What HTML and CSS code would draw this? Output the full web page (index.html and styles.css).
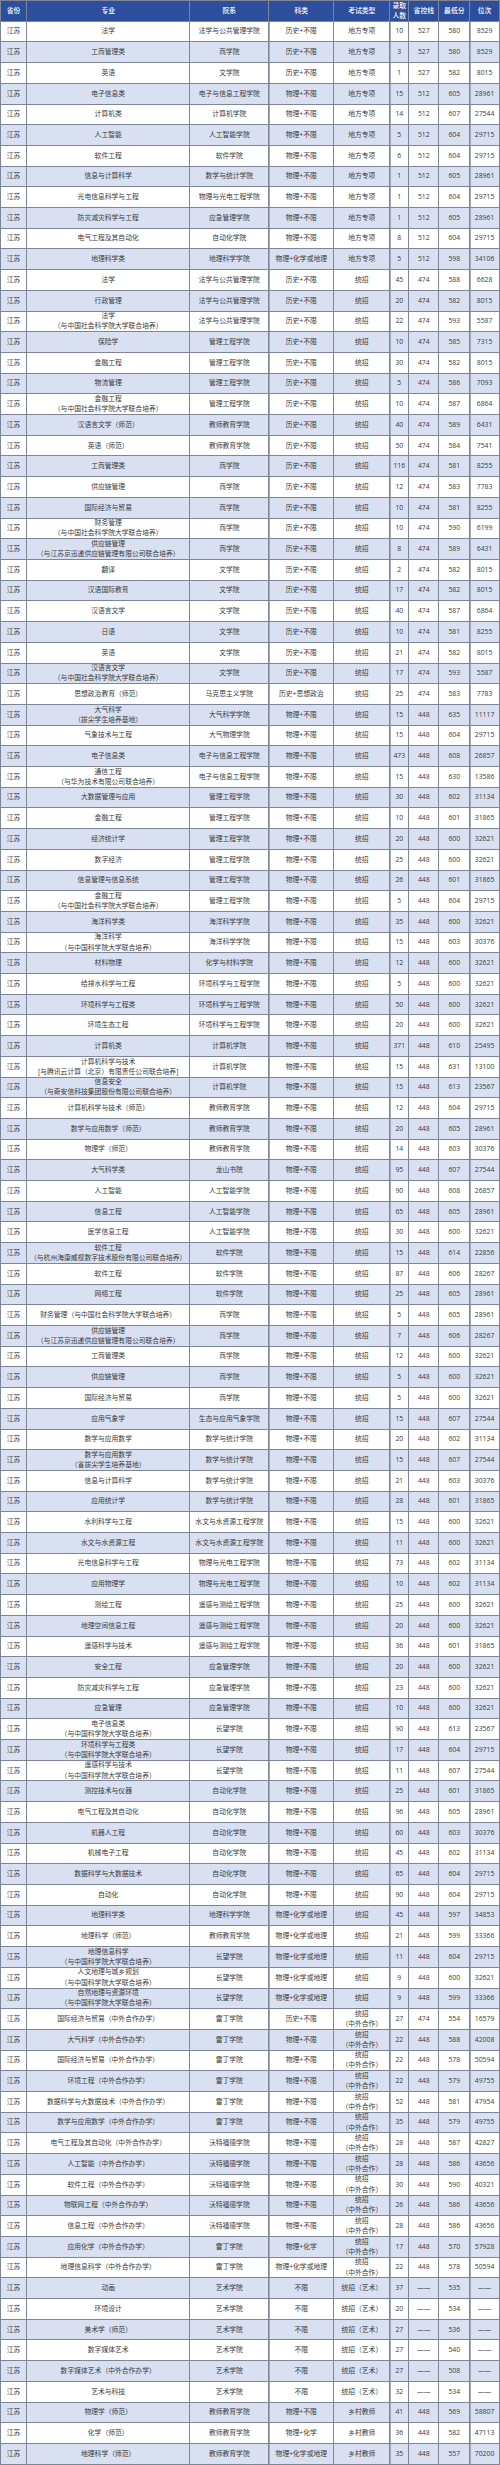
FILE: index.html
```html
<!DOCTYPE html>
<html lang="zh-CN">
<head>
<meta charset="utf-8">
<title>江苏录取分数</title>
<link rel="stylesheet" href="styles.css">
</head>
<body>
<table class="scores">
<thead>
<tr><th>省份</th><th>专业</th><th>院系</th><th>科类</th><th>考试类型</th><th>录取<br>人数</th><th>省控线</th><th>最低分</th><th>位次</th></tr>
</thead>
<tbody>
<tr><td>江苏</td><td>法学</td><td>法学与公共管理学院</td><td>历史+不限</td><td>地方专项</td><td>10</td><td>527</td><td>580</td><td>8529</td></tr>
<tr><td>江苏</td><td>工商管理类</td><td>商学院</td><td>历史+不限</td><td>地方专项</td><td>3</td><td>527</td><td>580</td><td>8529</td></tr>
<tr><td>江苏</td><td>英语</td><td>文学院</td><td>历史+不限</td><td>地方专项</td><td>1</td><td>527</td><td>582</td><td>8015</td></tr>
<tr><td>江苏</td><td>电子信息类</td><td>电子与信息工程学院</td><td>物理+不限</td><td>地方专项</td><td>15</td><td>512</td><td>605</td><td>28961</td></tr>
<tr><td>江苏</td><td>计算机类</td><td>计算机学院</td><td>物理+不限</td><td>地方专项</td><td>14</td><td>512</td><td>607</td><td>27544</td></tr>
<tr><td>江苏</td><td>人工智能</td><td>人工智能学院</td><td>物理+不限</td><td>地方专项</td><td>5</td><td>512</td><td>604</td><td>29715</td></tr>
<tr><td>江苏</td><td>软件工程</td><td>软件学院</td><td>物理+不限</td><td>地方专项</td><td>6</td><td>512</td><td>604</td><td>29715</td></tr>
<tr><td>江苏</td><td>信息与计算科学</td><td>数学与统计学院</td><td>物理+不限</td><td>地方专项</td><td>1</td><td>512</td><td>605</td><td>28961</td></tr>
<tr><td>江苏</td><td>光电信息科学与工程</td><td>物理与光电工程学院</td><td>物理+不限</td><td>地方专项</td><td>1</td><td>512</td><td>604</td><td>29715</td></tr>
<tr><td>江苏</td><td>防灾减灾科学与工程</td><td>应急管理学院</td><td>物理+不限</td><td>地方专项</td><td>1</td><td>512</td><td>605</td><td>28961</td></tr>
<tr><td>江苏</td><td>电气工程及其自动化</td><td>自动化学院</td><td>物理+不限</td><td>地方专项</td><td>8</td><td>512</td><td>604</td><td>29715</td></tr>
<tr><td>江苏</td><td>地理科学类</td><td>地理科学学院</td><td>物理+化学或地理</td><td>地方专项</td><td>5</td><td>512</td><td>598</td><td>34106</td></tr>
<tr><td>江苏</td><td>法学</td><td>法学与公共管理学院</td><td>历史+不限</td><td>统招</td><td>45</td><td>474</td><td>588</td><td>6628</td></tr>
<tr><td>江苏</td><td>行政管理</td><td>法学与公共管理学院</td><td>历史+不限</td><td>统招</td><td>20</td><td>474</td><td>582</td><td>8015</td></tr>
<tr><td>江苏</td><td>法学<br>（与中国社会科学院大学联合培养）</td><td>法学与公共管理学院</td><td>历史+不限</td><td>统招</td><td>22</td><td>474</td><td>593</td><td>5587</td></tr>
<tr><td>江苏</td><td>保险学</td><td>管理工程学院</td><td>历史+不限</td><td>统招</td><td>10</td><td>474</td><td>585</td><td>7315</td></tr>
<tr><td>江苏</td><td>金融工程</td><td>管理工程学院</td><td>历史+不限</td><td>统招</td><td>30</td><td>474</td><td>582</td><td>8015</td></tr>
<tr><td>江苏</td><td>物流管理</td><td>管理工程学院</td><td>历史+不限</td><td>统招</td><td>5</td><td>474</td><td>586</td><td>7093</td></tr>
<tr><td>江苏</td><td>金融工程<br>（与中国社会科学院大学联合培养）</td><td>管理工程学院</td><td>历史+不限</td><td>统招</td><td>10</td><td>474</td><td>587</td><td>6864</td></tr>
<tr><td>江苏</td><td>汉语言文学（师范）</td><td>教师教育学院</td><td>历史+不限</td><td>统招</td><td>40</td><td>474</td><td>589</td><td>6431</td></tr>
<tr><td>江苏</td><td>英语（师范）</td><td>教师教育学院</td><td>历史+不限</td><td>统招</td><td>50</td><td>474</td><td>584</td><td>7541</td></tr>
<tr><td>江苏</td><td>工商管理类</td><td>商学院</td><td>历史+不限</td><td>统招</td><td>116</td><td>474</td><td>581</td><td>8255</td></tr>
<tr><td>江苏</td><td>供应链管理</td><td>商学院</td><td>历史+不限</td><td>统招</td><td>12</td><td>474</td><td>583</td><td>7783</td></tr>
<tr><td>江苏</td><td>国际经济与贸易</td><td>商学院</td><td>历史+不限</td><td>统招</td><td>10</td><td>474</td><td>581</td><td>8255</td></tr>
<tr><td>江苏</td><td>财务管理<br>（与中国社会科学院大学联合培养）</td><td>商学院</td><td>历史+不限</td><td>统招</td><td>10</td><td>474</td><td>590</td><td>6199</td></tr>
<tr><td>江苏</td><td>供应链管理<br>（与江苏京迅递供应链管理有限公司联合培养）</td><td>商学院</td><td>历史+不限</td><td>统招</td><td>8</td><td>474</td><td>589</td><td>6431</td></tr>
<tr><td>江苏</td><td>翻译</td><td>文学院</td><td>历史+不限</td><td>统招</td><td>2</td><td>474</td><td>582</td><td>8015</td></tr>
<tr><td>江苏</td><td>汉语国际教育</td><td>文学院</td><td>历史+不限</td><td>统招</td><td>17</td><td>474</td><td>582</td><td>8015</td></tr>
<tr><td>江苏</td><td>汉语言文学</td><td>文学院</td><td>历史+不限</td><td>统招</td><td>40</td><td>474</td><td>587</td><td>6864</td></tr>
<tr><td>江苏</td><td>日语</td><td>文学院</td><td>历史+不限</td><td>统招</td><td>10</td><td>474</td><td>581</td><td>8255</td></tr>
<tr><td>江苏</td><td>英语</td><td>文学院</td><td>历史+不限</td><td>统招</td><td>21</td><td>474</td><td>582</td><td>8015</td></tr>
<tr><td>江苏</td><td>汉语言文学<br>（与中国社会科学院大学联合培养）</td><td>文学院</td><td>历史+不限</td><td>统招</td><td>17</td><td>474</td><td>593</td><td>5587</td></tr>
<tr><td>江苏</td><td>思想政治教育（师范）</td><td>马克思主义学院</td><td>历史+思想政治</td><td>统招</td><td>25</td><td>474</td><td>583</td><td>7783</td></tr>
<tr><td>江苏</td><td>大气科学<br>（拔尖学生培养基地）</td><td>大气科学学院</td><td>物理+不限</td><td>统招</td><td>15</td><td>448</td><td>635</td><td>11117</td></tr>
<tr><td>江苏</td><td>气象技术与工程</td><td>大气物理学院</td><td>物理+不限</td><td>统招</td><td>15</td><td>448</td><td>604</td><td>29715</td></tr>
<tr><td>江苏</td><td>电子信息类</td><td>电子与信息工程学院</td><td>物理+不限</td><td>统招</td><td>473</td><td>448</td><td>608</td><td>26857</td></tr>
<tr><td>江苏</td><td>通信工程<br>（与华为技术有限公司联合培养）</td><td>电子与信息工程学院</td><td>物理+不限</td><td>统招</td><td>15</td><td>448</td><td>630</td><td>13586</td></tr>
<tr><td>江苏</td><td>大数据管理与应用</td><td>管理工程学院</td><td>物理+不限</td><td>统招</td><td>30</td><td>448</td><td>602</td><td>31134</td></tr>
<tr><td>江苏</td><td>金融工程</td><td>管理工程学院</td><td>物理+不限</td><td>统招</td><td>10</td><td>448</td><td>601</td><td>31865</td></tr>
<tr><td>江苏</td><td>经济统计学</td><td>管理工程学院</td><td>物理+不限</td><td>统招</td><td>20</td><td>448</td><td>600</td><td>32621</td></tr>
<tr><td>江苏</td><td>数字经济</td><td>管理工程学院</td><td>物理+不限</td><td>统招</td><td>25</td><td>448</td><td>600</td><td>32621</td></tr>
<tr><td>江苏</td><td>信息管理与信息系统</td><td>管理工程学院</td><td>物理+不限</td><td>统招</td><td>26</td><td>448</td><td>601</td><td>31865</td></tr>
<tr><td>江苏</td><td>金融工程<br>（与中国社会科学院大学联合培养）</td><td>管理工程学院</td><td>物理+不限</td><td>统招</td><td>5</td><td>448</td><td>604</td><td>29715</td></tr>
<tr><td>江苏</td><td>海洋科学类</td><td>海洋科学学院</td><td>物理+不限</td><td>统招</td><td>35</td><td>448</td><td>600</td><td>32621</td></tr>
<tr><td>江苏</td><td>海洋科学<br>（与中国科学院大学联合培养）</td><td>海洋科学学院</td><td>物理+不限</td><td>统招</td><td>15</td><td>448</td><td>603</td><td>30376</td></tr>
<tr><td>江苏</td><td>材料物理</td><td>化学与材料学院</td><td>物理+不限</td><td>统招</td><td>12</td><td>448</td><td>600</td><td>32621</td></tr>
<tr><td>江苏</td><td>给排水科学与工程</td><td>环境科学与工程学院</td><td>物理+不限</td><td>统招</td><td>5</td><td>448</td><td>600</td><td>32621</td></tr>
<tr><td>江苏</td><td>环境科学与工程类</td><td>环境科学与工程学院</td><td>物理+不限</td><td>统招</td><td>50</td><td>448</td><td>600</td><td>32621</td></tr>
<tr><td>江苏</td><td>环境生态工程</td><td>环境科学与工程学院</td><td>物理+不限</td><td>统招</td><td>20</td><td>448</td><td>600</td><td>32621</td></tr>
<tr><td>江苏</td><td>计算机类</td><td>计算机学院</td><td>物理+不限</td><td>统招</td><td>371</td><td>448</td><td>610</td><td>25495</td></tr>
<tr><td>江苏</td><td>计算机科学与技术<br>[与腾讯云计算（北京）有限责任公司联合培养]</td><td>计算机学院</td><td>物理+不限</td><td>统招</td><td>15</td><td>448</td><td>631</td><td>13100</td></tr>
<tr><td>江苏</td><td>信息安全<br>（与奇安信科技集团股份有限公司联合培养）</td><td>计算机学院</td><td>物理+不限</td><td>统招</td><td>15</td><td>448</td><td>613</td><td>23567</td></tr>
<tr><td>江苏</td><td>计算机科学与技术（师范）</td><td>教师教育学院</td><td>物理+不限</td><td>统招</td><td>12</td><td>448</td><td>604</td><td>29715</td></tr>
<tr><td>江苏</td><td>数学与应用数学（师范）</td><td>教师教育学院</td><td>物理+不限</td><td>统招</td><td>20</td><td>448</td><td>605</td><td>28961</td></tr>
<tr><td>江苏</td><td>物理学（师范）</td><td>教师教育学院</td><td>物理+不限</td><td>统招</td><td>14</td><td>448</td><td>603</td><td>30376</td></tr>
<tr><td>江苏</td><td>大气科学类</td><td>龙山书院</td><td>物理+不限</td><td>统招</td><td>95</td><td>448</td><td>607</td><td>27544</td></tr>
<tr><td>江苏</td><td>人工智能</td><td>人工智能学院</td><td>物理+不限</td><td>统招</td><td>90</td><td>448</td><td>608</td><td>26857</td></tr>
<tr><td>江苏</td><td>信息工程</td><td>人工智能学院</td><td>物理+不限</td><td>统招</td><td>65</td><td>448</td><td>605</td><td>28961</td></tr>
<tr><td>江苏</td><td>医学信息工程</td><td>人工智能学院</td><td>物理+不限</td><td>统招</td><td>30</td><td>448</td><td>600</td><td>32621</td></tr>
<tr><td>江苏</td><td>软件工程<br>（与杭州海康威视数字技术股份有限公司联合培养）</td><td>软件学院</td><td>物理+不限</td><td>统招</td><td>15</td><td>448</td><td>614</td><td>22856</td></tr>
<tr><td>江苏</td><td>软件工程</td><td>软件学院</td><td>物理+不限</td><td>统招</td><td>87</td><td>448</td><td>606</td><td>28267</td></tr>
<tr><td>江苏</td><td>网络工程</td><td>软件学院</td><td>物理+不限</td><td>统招</td><td>25</td><td>448</td><td>605</td><td>28961</td></tr>
<tr><td>江苏</td><td>财务管理（与中国社会科学院大学联合培养）</td><td>商学院</td><td>物理+不限</td><td>统招</td><td>5</td><td>448</td><td>605</td><td>28961</td></tr>
<tr><td>江苏</td><td>供应链管理<br>（与江苏京迅递供应链管理有限公司联合培养）</td><td>商学院</td><td>物理+不限</td><td>统招</td><td>7</td><td>448</td><td>606</td><td>28267</td></tr>
<tr><td>江苏</td><td>工商管理类</td><td>商学院</td><td>物理+不限</td><td>统招</td><td>12</td><td>448</td><td>600</td><td>32621</td></tr>
<tr><td>江苏</td><td>供应链管理</td><td>商学院</td><td>物理+不限</td><td>统招</td><td>5</td><td>448</td><td>600</td><td>32621</td></tr>
<tr><td>江苏</td><td>国际经济与贸易</td><td>商学院</td><td>物理+不限</td><td>统招</td><td>5</td><td>448</td><td>600</td><td>32621</td></tr>
<tr><td>江苏</td><td>应用气象学</td><td>生态与应用气象学院</td><td>物理+不限</td><td>统招</td><td>15</td><td>448</td><td>607</td><td>27544</td></tr>
<tr><td>江苏</td><td>数学与应用数学</td><td>数学与统计学院</td><td>物理+不限</td><td>统招</td><td>20</td><td>448</td><td>602</td><td>31134</td></tr>
<tr><td>江苏</td><td>数学与应用数学<br>（省拔尖学生培养基地）</td><td>数学与统计学院</td><td>物理+不限</td><td>统招</td><td>15</td><td>448</td><td>607</td><td>27544</td></tr>
<tr><td>江苏</td><td>信息与计算科学</td><td>数学与统计学院</td><td>物理+不限</td><td>统招</td><td>21</td><td>448</td><td>603</td><td>30376</td></tr>
<tr><td>江苏</td><td>应用统计学</td><td>数学与统计学院</td><td>物理+不限</td><td>统招</td><td>28</td><td>448</td><td>601</td><td>31865</td></tr>
<tr><td>江苏</td><td>水利科学与工程</td><td>水文与水资源工程学院</td><td>物理+不限</td><td>统招</td><td>15</td><td>448</td><td>600</td><td>32621</td></tr>
<tr><td>江苏</td><td>水文与水资源工程</td><td>水文与水资源工程学院</td><td>物理+不限</td><td>统招</td><td>11</td><td>448</td><td>600</td><td>32621</td></tr>
<tr><td>江苏</td><td>光电信息科学与工程</td><td>物理与光电工程学院</td><td>物理+不限</td><td>统招</td><td>73</td><td>448</td><td>602</td><td>31134</td></tr>
<tr><td>江苏</td><td>应用物理学</td><td>物理与光电工程学院</td><td>物理+不限</td><td>统招</td><td>10</td><td>448</td><td>602</td><td>31134</td></tr>
<tr><td>江苏</td><td>测绘工程</td><td>遥感与测绘工程学院</td><td>物理+不限</td><td>统招</td><td>25</td><td>448</td><td>600</td><td>32621</td></tr>
<tr><td>江苏</td><td>地理空间信息工程</td><td>遥感与测绘工程学院</td><td>物理+不限</td><td>统招</td><td>20</td><td>448</td><td>600</td><td>32621</td></tr>
<tr><td>江苏</td><td>遥感科学与技术</td><td>遥感与测绘工程学院</td><td>物理+不限</td><td>统招</td><td>36</td><td>448</td><td>601</td><td>31865</td></tr>
<tr><td>江苏</td><td>安全工程</td><td>应急管理学院</td><td>物理+不限</td><td>统招</td><td>20</td><td>448</td><td>600</td><td>32621</td></tr>
<tr><td>江苏</td><td>防灾减灾科学与工程</td><td>应急管理学院</td><td>物理+不限</td><td>统招</td><td>23</td><td>448</td><td>600</td><td>32621</td></tr>
<tr><td>江苏</td><td>应急管理</td><td>应急管理学院</td><td>物理+不限</td><td>统招</td><td>10</td><td>448</td><td>600</td><td>32621</td></tr>
<tr><td>江苏</td><td>电子信息类<br>（与中国科学院大学联合培养）</td><td>长望学院</td><td>物理+不限</td><td>统招</td><td>90</td><td>448</td><td>613</td><td>23567</td></tr>
<tr><td>江苏</td><td>环境科学与工程类<br>（与中国科学院大学联合培养）</td><td>长望学院</td><td>物理+不限</td><td>统招</td><td>17</td><td>448</td><td>604</td><td>29715</td></tr>
<tr><td>江苏</td><td>遥感科学与技术<br>（与中国科学院大学联合培养）</td><td>长望学院</td><td>物理+不限</td><td>统招</td><td>11</td><td>448</td><td>607</td><td>27544</td></tr>
<tr><td>江苏</td><td>测控技术与仪器</td><td>自动化学院</td><td>物理+不限</td><td>统招</td><td>25</td><td>448</td><td>601</td><td>31865</td></tr>
<tr><td>江苏</td><td>电气工程及其自动化</td><td>自动化学院</td><td>物理+不限</td><td>统招</td><td>96</td><td>448</td><td>605</td><td>28961</td></tr>
<tr><td>江苏</td><td>机器人工程</td><td>自动化学院</td><td>物理+不限</td><td>统招</td><td>60</td><td>448</td><td>603</td><td>30376</td></tr>
<tr><td>江苏</td><td>机械电子工程</td><td>自动化学院</td><td>物理+不限</td><td>统招</td><td>45</td><td>448</td><td>602</td><td>31134</td></tr>
<tr><td>江苏</td><td>数据科学与大数据技术</td><td>自动化学院</td><td>物理+不限</td><td>统招</td><td>65</td><td>448</td><td>604</td><td>29715</td></tr>
<tr><td>江苏</td><td>自动化</td><td>自动化学院</td><td>物理+不限</td><td>统招</td><td>90</td><td>448</td><td>604</td><td>29715</td></tr>
<tr><td>江苏</td><td>地理科学类</td><td>地理科学学院</td><td>物理+化学或地理</td><td>统招</td><td>45</td><td>448</td><td>597</td><td>34853</td></tr>
<tr><td>江苏</td><td>地理科学（师范）</td><td>教师教育学院</td><td>物理+化学或地理</td><td>统招</td><td>21</td><td>448</td><td>599</td><td>33366</td></tr>
<tr><td>江苏</td><td>地理信息科学<br>（与中国科学院大学联合培养）</td><td>长望学院</td><td>物理+化学或地理</td><td>统招</td><td>11</td><td>448</td><td>604</td><td>29715</td></tr>
<tr><td>江苏</td><td>人文地理与城乡规划<br>（与中国科学院大学联合培养）</td><td>长望学院</td><td>物理+化学或地理</td><td>统招</td><td>9</td><td>448</td><td>600</td><td>32621</td></tr>
<tr><td>江苏</td><td>自然地理与资源环境<br>（与中国科学院大学联合培养）</td><td>长望学院</td><td>物理+化学或地理</td><td>统招</td><td>9</td><td>448</td><td>599</td><td>33366</td></tr>
<tr><td>江苏</td><td>国际经济与贸易（中外合作办学）</td><td>雷丁学院</td><td>历史+不限</td><td>统招<br>（中外合作）</td><td>27</td><td>474</td><td>554</td><td>16579</td></tr>
<tr><td>江苏</td><td>大气科学（中外合作办学）</td><td>雷丁学院</td><td>物理+不限</td><td>统招<br>（中外合作）</td><td>22</td><td>448</td><td>588</td><td>42008</td></tr>
<tr><td>江苏</td><td>国际经济与贸易（中外合作办学）</td><td>雷丁学院</td><td>物理+不限</td><td>统招<br>（中外合作）</td><td>22</td><td>448</td><td>578</td><td>50594</td></tr>
<tr><td>江苏</td><td>环境工程（中外合作办学）</td><td>雷丁学院</td><td>物理+不限</td><td>统招<br>（中外合作）</td><td>22</td><td>448</td><td>579</td><td>49755</td></tr>
<tr><td>江苏</td><td>数据科学与大数据技术（中外合作办学）</td><td>雷丁学院</td><td>物理+不限</td><td>统招<br>（中外合作）</td><td>52</td><td>448</td><td>581</td><td>47954</td></tr>
<tr><td>江苏</td><td>数学与应用数学（中外合作办学）</td><td>雷丁学院</td><td>物理+不限</td><td>统招<br>（中外合作）</td><td>35</td><td>448</td><td>579</td><td>49755</td></tr>
<tr><td>江苏</td><td>电气工程及其自动化（中外合作办学）</td><td>沃特福德学院</td><td>物理+不限</td><td>统招<br>（中外合作）</td><td>28</td><td>448</td><td>587</td><td>42827</td></tr>
<tr><td>江苏</td><td>人工智能（中外合作办学）</td><td>沃特福德学院</td><td>物理+不限</td><td>统招<br>（中外合作）</td><td>28</td><td>448</td><td>586</td><td>43656</td></tr>
<tr><td>江苏</td><td>软件工程（中外合作办学）</td><td>沃特福德学院</td><td>物理+不限</td><td>统招<br>（中外合作）</td><td>30</td><td>448</td><td>590</td><td>40321</td></tr>
<tr><td>江苏</td><td>物联网工程（中外合作办学）</td><td>沃特福德学院</td><td>物理+不限</td><td>统招<br>（中外合作）</td><td>26</td><td>448</td><td>586</td><td>43656</td></tr>
<tr><td>江苏</td><td>信息工程（中外合作办学）</td><td>沃特福德学院</td><td>物理+不限</td><td>统招<br>（中外合作）</td><td>28</td><td>448</td><td>586</td><td>43656</td></tr>
<tr><td>江苏</td><td>应用化学（中外合作办学）</td><td>雷丁学院</td><td>物理+化学</td><td>统招<br>（中外合作）</td><td>17</td><td>448</td><td>570</td><td>57928</td></tr>
<tr><td>江苏</td><td>地理信息科学（中外合作办学）</td><td>雷丁学院</td><td>物理+化学或地理</td><td>统招<br>（中外合作）</td><td>22</td><td>448</td><td>578</td><td>50594</td></tr>
<tr><td>江苏</td><td>动画</td><td>艺术学院</td><td>不限</td><td>统招（艺术）</td><td>37</td><td>——</td><td>535</td><td>——</td></tr>
<tr><td>江苏</td><td>环境设计</td><td>艺术学院</td><td>不限</td><td>统招（艺术）</td><td>20</td><td>——</td><td>534</td><td>——</td></tr>
<tr><td>江苏</td><td>美术学（师范）</td><td>艺术学院</td><td>不限</td><td>统招（艺术）</td><td>27</td><td>——</td><td>536</td><td>——</td></tr>
<tr><td>江苏</td><td>数字媒体艺术</td><td>艺术学院</td><td>不限</td><td>统招（艺术）</td><td>27</td><td>——</td><td>540</td><td>——</td></tr>
<tr><td>江苏</td><td>数字媒体艺术（中外合作办学）</td><td>艺术学院</td><td>不限</td><td>统招（艺术）</td><td>27</td><td>——</td><td>508</td><td>——</td></tr>
<tr><td>江苏</td><td>艺术与科技</td><td>艺术学院</td><td>不限</td><td>统招（艺术）</td><td>32</td><td>——</td><td>534</td><td>——</td></tr>
<tr><td>江苏</td><td>物理学（师范）</td><td>教师教育学院</td><td>物理+不限</td><td>乡村教师</td><td>41</td><td>448</td><td>569</td><td>58807</td></tr>
<tr><td>江苏</td><td>化学（师范）</td><td>教师教育学院</td><td>物理+化学</td><td>乡村教师</td><td>36</td><td>448</td><td>582</td><td>47113</td></tr>
<tr><td>江苏</td><td>地理科学（师范）</td><td>教师教育学院</td><td>物理+化学或地理</td><td>乡村教师</td><td>35</td><td>448</td><td>557</td><td>70200</td></tr>
</tbody>
</table>
</body>
</html>
```
FILE: styles.css
```css
html, body {
  margin: 0;
  padding: 0;
  background: #ffffff;
}

/* The table is laid out as a grid so every row gets exactly the same height */
.scores {
  display: grid;
  box-sizing: border-box;
  width: 500px;
  padding: 1px;
  gap: 1px;
  grid-template-columns: 25.2px 162px 78.3px 63.7px 55.3px 17.7px 29.3px 29.7px 1fr;
  grid-auto-rows: 19.706px;
  background: #7d8597;
  font-family: "Open Sans", "Noto Sans CJK SC", sans-serif;
  font-size: 6.8px;
  line-height: 10.2px;
  color: #3a3a3a;
}

.scores thead,
.scores tbody,
.scores tr {
  display: contents;
}

.scores th,
.scores td {
  display: flex;
  flex-direction: column;
  align-items: center;
  justify-content: center;
  padding: 0;
  text-align: center;
  white-space: nowrap;
  background: #ffffff;
  min-width: 0;
  min-height: 0;
}

.scores th {
  background: #2c4e9c;
  color: #ffffff;
  font-weight: 500;
}

.scores tbody tr:nth-child(even) td {
  background: #d8e0f2;
}

.scores td:nth-child(4),
.scores td:nth-child(6),
.scores td:nth-child(9) {
  box-shadow: inset 1px 0 0 #a3aaba;
}
```
